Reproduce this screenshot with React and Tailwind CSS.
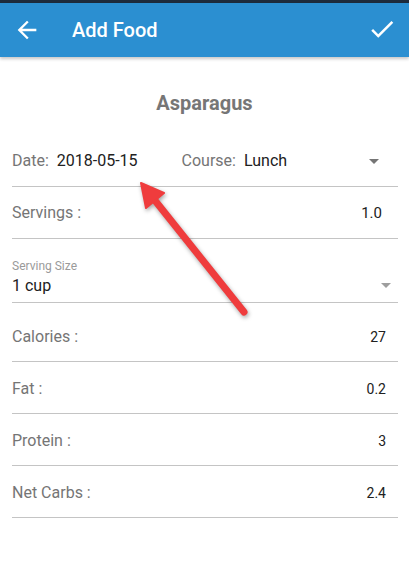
import React from 'react';

const rows = [
    { label: "Calories :", value: "27", pt: true },
    { label: "Fat :", value: "0.2" },
    { label: "Protein :", value: "3" },
    { label: "Net Carbs :", value: "2.4" },
];

const Caret = ({ className }) => (
    <svg width="10" height="5" viewBox="0 0 10 5" className={className}>
        <path d="M0 0h10L5 5z" fill="currentColor" />
    </svg>
);

const App = () => {
    return (
        <div className="relative w-[409px] h-[562px] bg-white overflow-hidden" style={{ fontFamily: 'Roboto, "Noto Sans", sans-serif' }}>
            {/* status strip + toolbar */}
            <div className="h-[3px] bg-[#1d2b3c]" />
            <div className="h-[54px] bg-[#2b8fd1] flex items-center text-white shadow-[0_2px_3px_rgba(0,0,0,0.22)] relative z-10">
                <svg width="28" height="28" viewBox="0 0 24 24" className="ml-[13px]">
                    <path fill="currentColor" d="M20 11H7.83l5.59-5.59L12 4l-8 8 8 8 1.41-1.41L7.83 13H20v-2z" />
                </svg>
                <h1 className="ml-[31px] text-[20px] font-medium leading-none">Add Food</h1>
                <svg width="30" height="30" viewBox="0 0 24 24" className="ml-auto mr-[12px] -mt-[3px]">
                    <path fill="currentColor" d="M9 16.17L4.83 12l-1.42 1.41L9 19 21 7l-1.41-1.41z" />
                </svg>
            </div>

            {/* title */}
            <div className="h-[76px] pt-[34px] text-center">
                <h2 className="text-[20px] leading-[24px] font-bold text-[#767676]">Asparagus</h2>
            </div>

            <div className="ml-3 mr-[11px]">
                {/* date / course */}
                <div className="h-[54px] flex items-end pb-[13px] border-b border-[#c4c4c4] text-[16px] leading-[24px]">
                    <span className="text-[#757575]">Date:</span>
                    <span className="ml-[8px] text-[#212121]">2018-05-15</span>
                    <span className="ml-[44px] text-[#757575]">Course:</span>
                    <span className="ml-[8px] text-[#212121]">Lunch</span>
                    <Caret className="ml-auto mr-[19px] mb-[9px] text-[#757575]" />
                </div>

                {/* servings */}
                <div className="h-[52px] flex items-end justify-between pb-[13px] border-b border-[#c4c4c4] text-[16px] leading-[24px]">
                    <span className="text-[#757575]">Servings :</span>
                    <span className="mr-[16px] text-[15px] text-[#212121]">1.0</span>
                </div>

                {/* serving size */}
                <div className="h-[64px] flex items-end pb-[5px] border-b border-[#c4c4c4]">
                    <div className="flex-1">
                        <div className="mb-[2px] text-[12px] leading-[14px] text-[#9a9a9a]">Serving Size</div>
                        <div className="text-[16px] leading-[22px] text-[#212121]">1 cup</div>
                    </div>
                    <Caret className="mr-[7px] mb-[9px] text-[#9e9e9e]" />
                </div>

                {rows.map((r) => (
                    <div
                        key={r.label}
                        className={`${r.pt ? "h-[59px]" : "h-[52px]"} flex items-end justify-between pb-[12px] border-b border-[#c4c4c4] leading-[24px]`}
                    >
                        <span className="text-[16px] text-[#757575]">{r.label}</span>
                        <span className="mr-[12px] text-[14px] text-[#212121]">{r.value}</span>
                    </div>
                ))}
            </div>

            {/* red annotation arrow */}
            <svg
                className="absolute left-0 top-0 pointer-events-none drop-shadow-[1px_2px_2px_rgba(0,0,0,0.35)]"
                width="409"
                height="562"
                viewBox="0 0 409 562"
            >
                <line x1="244" y1="312" x2="153" y2="198" stroke="#ef3c3d" strokeWidth="7" strokeLinecap="round" />
                <polygon points="141,183 164,193 146,208" fill="#ef3c3d" stroke="#ef3c3d" strokeWidth="2" strokeLinejoin="round" />
            </svg>
        </div>
    );
};

export default App;
